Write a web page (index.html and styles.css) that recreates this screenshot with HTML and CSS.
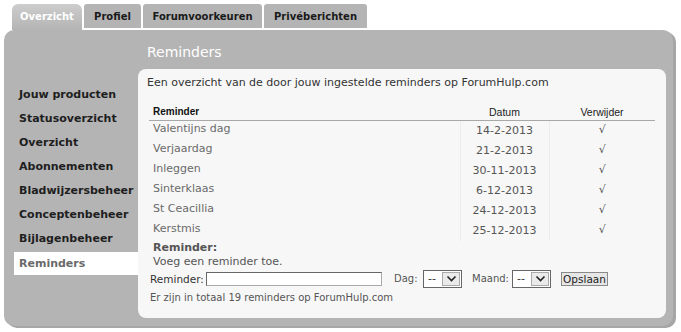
FILE: index.html
```html
<!DOCTYPE html>
<html lang="nl">
<head>
<meta charset="utf-8">
<title>Reminders</title>
<link rel="stylesheet" href="styles.css">
</head>
<body>
<div class="page">
  <nav class="tabs">
    <a class="tab tab-active tab-overzicht">Overzicht</a>
    <a class="tab tab-profiel">Profiel</a>
    <a class="tab tab-forum">Forumvoorkeuren</a>
    <a class="tab tab-prive">Privéberichten</a>
  </nav>
  <div class="panel">
    <h1 class="panel-title">Reminders</h1>
    <div class="panel-body">
      <ul class="side">
        <li class="side-item">Jouw producten</li>
        <li class="side-item">Statusoverzicht</li>
        <li class="side-item">Overzicht</li>
        <li class="side-item">Abonnementen</li>
        <li class="side-item">Bladwijzersbeheer</li>
        <li class="side-item">Conceptenbeheer</li>
        <li class="side-item">Bijlagenbeheer</li>
        <li class="side-item side-active">Reminders</li>
      </ul>
      <div class="content">
        <p class="intro">Een overzicht van de door jouw ingestelde reminders op ForumHulp.com</p>
        <table class="rem-table">
          <thead>
            <tr><th class="c-name">Reminder</th><th class="c-date">Datum</th><th class="c-del">Verwijder</th></tr>
          </thead>
          <tbody>
            <tr><td class="c-name">Valentijns dag</td><td class="c-date">14-2-2013</td><td class="c-del">√</td></tr>
            <tr><td class="c-name">Verjaardag</td><td class="c-date">21-2-2013</td><td class="c-del">√</td></tr>
            <tr><td class="c-name">Inleggen</td><td class="c-date">30-11-2013</td><td class="c-del">√</td></tr>
            <tr><td class="c-name">Sinterklaas</td><td class="c-date">6-12-2013</td><td class="c-del">√</td></tr>
            <tr><td class="c-name">St Ceacillia</td><td class="c-date">24-12-2013</td><td class="c-del">√</td></tr>
            <tr><td class="c-name">Kerstmis</td><td class="c-date">25-12-2013</td><td class="c-del">√</td></tr>
          </tbody>
        </table>
        <div class="add-title">Reminder:</div>
        <div class="add-sub">Voeg een reminder toe.</div>
        <form class="add-form">
          <label class="lbl lbl-rem">Reminder:</label>
          <span class="input"></span>
          <label class="lbl lbl-dag">Dag:</label>
          <span class="select"><span class="sel-val">--</span><span class="sel-btn"><svg width="11" height="7" viewBox="0 0 11 7"><path d="M1.5 1.5 L5.5 5.5 L9.5 1.5" fill="none" stroke="#222" stroke-width="1.6"/></svg></span></span>
          <label class="lbl lbl-maand">Maand:</label>
          <span class="select"><span class="sel-val">--</span><span class="sel-btn"><svg width="11" height="7" viewBox="0 0 11 7"><path d="M1.5 1.5 L5.5 5.5 L9.5 1.5" fill="none" stroke="#222" stroke-width="1.6"/></svg></span></span>
          <span class="btn">Opslaan</span>
        </form>
        <p class="total">Er zijn in totaal 19 reminders op ForumHulp.com</p>
      </div>
    </div>
  </div>
</div>
</body>
</html>
```
FILE: styles.css
```css
* { box-sizing: border-box; }
html, body { margin: 0; padding: 0; background: #fff; }
body {
  font-family: "DejaVu Sans", Verdana, sans-serif;
  color: #333;
  width: 681px;
  height: 332px;
  overflow: hidden;
}
.page { padding: 4px 0 0 4px; }

.tabs {
  display: flex;
  align-items: flex-start;
  gap: 2px;
  padding-left: 8px;
  height: 26px;
}
.tab {
  display: flex;
  align-items: center;
  justify-content: center;
  height: 24px;
  background: #b4b4b4;
  color: #1a1a1a;
  font-size: 10px;
  font-weight: bold;
  border-radius: 3px 3px 0 0;
}
.tab-active {
  height: 26px;
  color: #fff;
  background: linear-gradient(#cdcdcd, #b4b4b4);
  border-radius: 6px 6px 0 0;
  padding-bottom: 2px;
}
.tab-overzicht { width: 70px; }
.tab-profiel { width: 57px; }
.tab-forum { width: 119px; }
.tab-prive { width: 103px; }

.panel {
  width: 669px;
  height: 296px;
  background: #b4b4b4;
  border-radius: 10px;
  box-shadow: 3px 2px 0 #a6a6a6;
}
.panel-title {
  margin: 0;
  height: 39px;
  padding: 13px 0 0 143px;
  font-size: 14px;
  font-weight: normal;
  color: #fff;
  line-height: 18px;
}
.panel-body {
  display: flex;
  align-items: flex-start;
}
.side {
  list-style: none;
  margin: 0;
  padding: 14px 0 0 10px;
  width: 134px;
}
.side-item {
  height: 24px;
  line-height: 24px;
  padding-left: 5px;
  font-size: 11px;
  font-weight: bold;
  color: #1e1e1e;
  white-space: nowrap;
}
.side-active {
  background: #fff;
  color: #6a6a6a;
  height: 23px;
  margin-top: 1px;
}
.content {
  width: 528px;
  height: 249px;
  background: #f7f7f7;
  border-radius: 8px;
  padding: 6px 11px 0 9px;
}
.intro {
  margin: 0;
  font-size: 11px;
  line-height: 16px;
  color: #333;
}
.rem-table {
  margin: 8px 0 0 2px;
  width: 506px;
  border-collapse: collapse;
}
.rem-table th {
  font-family: "Liberation Sans", Arial, sans-serif;
  font-size: 10.5px;
  line-height: 14px;
  padding: 6px 4px 1px;
  border-bottom: 1px solid #a8a8a8;
  color: #222;
  font-weight: normal;
}
.rem-table th.c-name { text-align: left; font-weight: bold; font-size: 10px; color: #111; }
.rem-table td {
  height: 20px;
  padding: 0 4px;
  line-height: 16px;
  vertical-align: top;
}
.c-name { width: 311px; }
.c-date { width: 89px; text-align: center; }
.c-del { width: 106px; text-align: center; }
td.c-name { font-size: 11px; color: #6a6a6a; }
td.c-date { font-size: 11px; color: #555; border-left: 1px solid #ececec; border-right: 1px solid #ececec; padding-top: 2px; }
td.c-del { font-size: 11px; color: #555; padding-top: 1px; }
.add-title {
  margin: 0 0 0 6px;
  font-size: 11px;
  font-weight: bold;
  color: #555;
  line-height: 14px;
}
.add-sub {
  margin-left: 6px;
  font-size: 11px;
  color: #555;
  line-height: 14px;
}
.add-form {
  display: flex;
  align-items: center;
  margin: 1px 0 0 3px;
  height: 18px;
  font-size: 10px;
  color: #333;
}
.lbl { white-space: nowrap; }
.lbl-rem { width: 56px; font-size: 10.5px; }
.lbl-dag { width: 29px; margin-left: 12px; color: #555; }
.lbl-maand { width: 40px; margin-left: 10px; color: #555; }
.input {
  display: block;
  width: 176px;
  height: 14px;
  background: #fff;
  border: 1px solid #777;
  border-color: #666 #aaa #aaa #666;
}
.select {
  display: flex;
  align-items: center;
  width: 39px;
  height: 18px;
  background: #fff;
  border: 1px solid #666;
  padding: 1px;
}
.sel-val { flex: 1; padding-left: 3px; font-size: 11px; }
.sel-btn {
  display: flex;
  align-items: center;
  justify-content: center;
  width: 18px;
  height: 14px;
  background: #eaeaea;
  border: 1px solid #aaa;
}
.btn {
  display: flex;
  align-items: center;
  justify-content: center;
  margin-left: 10px;
  width: 47px;
  height: 14px;
  background: #e6e6e6;
  border: 1px solid #8a8a8a;
  font-size: 10.5px;
  color: #222;
}
.total {
  margin: 3px 0 0 3px;
  font-size: 10px;
  line-height: 14px;
  color: #555;
}
```
